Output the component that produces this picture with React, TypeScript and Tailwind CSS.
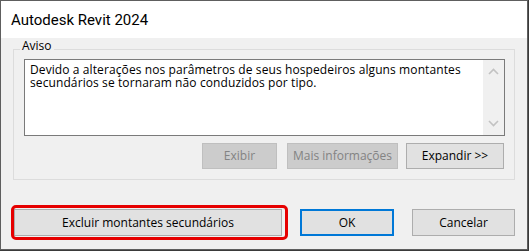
import { ReactNode } from 'react'

function Chevron({ up }: { up?: boolean }) {
  return (
    <svg width="11" height="7" viewBox="0 0 11 7" aria-hidden="true">
      <path
        d={up ? 'M1 6L5.5 1.5L10 6' : 'M1 1L5.5 5.5L10 1'}
        fill="none"
        stroke="#c2c2c2"
        strokeWidth="1.6"
      />
    </svg>
  )
}

function WinButton({ children, disabled, className = '' }: { children: ReactNode; disabled?: boolean; className?: string }) {
  return (
    <button
      disabled={disabled}
      className={
        'flex h-[26px] items-center justify-center border ' +
        (disabled ? 'border-[#bfbfbf] bg-[#cccccc] text-[#838383] ' : 'border-[#adadad] bg-[#e1e1e1] text-black ') +
        className
      }
    >
      {children}
    </button>
  )
}

export default function App() {
  return (
    <div className="h-[251px] w-[529px] bg-[#3a3a3a]">
      <div className="flex h-[250px] w-[528px] flex-col border border-[#5e5e5e] font-['Open_Sans',sans-serif] text-[12px] text-black">
        <div className="h-[37px] bg-white pl-[10px] pt-[9px] font-['Roboto',sans-serif] text-[15px] leading-[20px]">
          Autodesk Revit 2024
        </div>

        <div className="flex-1 bg-[#f0f0f0] px-[12px] pt-[11px]">
          <div className="relative border border-[#dcdcdc]">
            <span className="absolute -top-[12px] left-[6px] bg-[#f0f0f0] px-[2px] leading-[16px]">Aviso</span>

            <div className="ml-[10px] mr-[9px] mt-[9px] flex h-[77px] border border-[#7a7a7a] bg-white">
              <p className="flex-1 pl-[5px] pt-[3px] leading-[13px] tracking-[0.1px]">
                Devido a alterações nos parâmetros de seus hospedeiros alguns montantes secundários se tornaram não
                conduzidos por tipo.
              </p>
              <div className="flex w-[21px] flex-col items-center justify-between bg-[#f0f0f0] py-[8px]">
                <Chevron up />
                <Chevron />
              </div>
            </div>

            <div className="mb-[10px] mr-[10px] mt-[7px] flex justify-end">
              <WinButton disabled className="w-[75px]">
                Exibir
              </WinButton>
              <WinButton disabled className="ml-[10px] w-[111px]">
                Mais informações
              </WinButton>
              <WinButton className="ml-[8px] w-[98px]">Expandir &gt;&gt;</WinButton>
            </div>
          </div>

          <div className="mt-[29px] flex">
            <div className="relative ml-[1px]">
              <WinButton className="h-[27px] w-[268px]">Excluir montantes secundários</WinButton>
              <div className="pointer-events-none absolute -left-[3px] -top-[4px] h-[35px] w-[277px] rounded-[5px] border-[3px] border-[#e60000]" />
            </div>
            <button className="ml-[18px] flex h-[27px] w-[94px] items-center justify-center border-2 border-[#0078d7] bg-[#e1e1e1]">
              OK
            </button>
            <WinButton className="ml-[18px] h-[27px] w-[103px]">Cancelar</WinButton>
          </div>
        </div>
      </div>
    </div>
  )
}
